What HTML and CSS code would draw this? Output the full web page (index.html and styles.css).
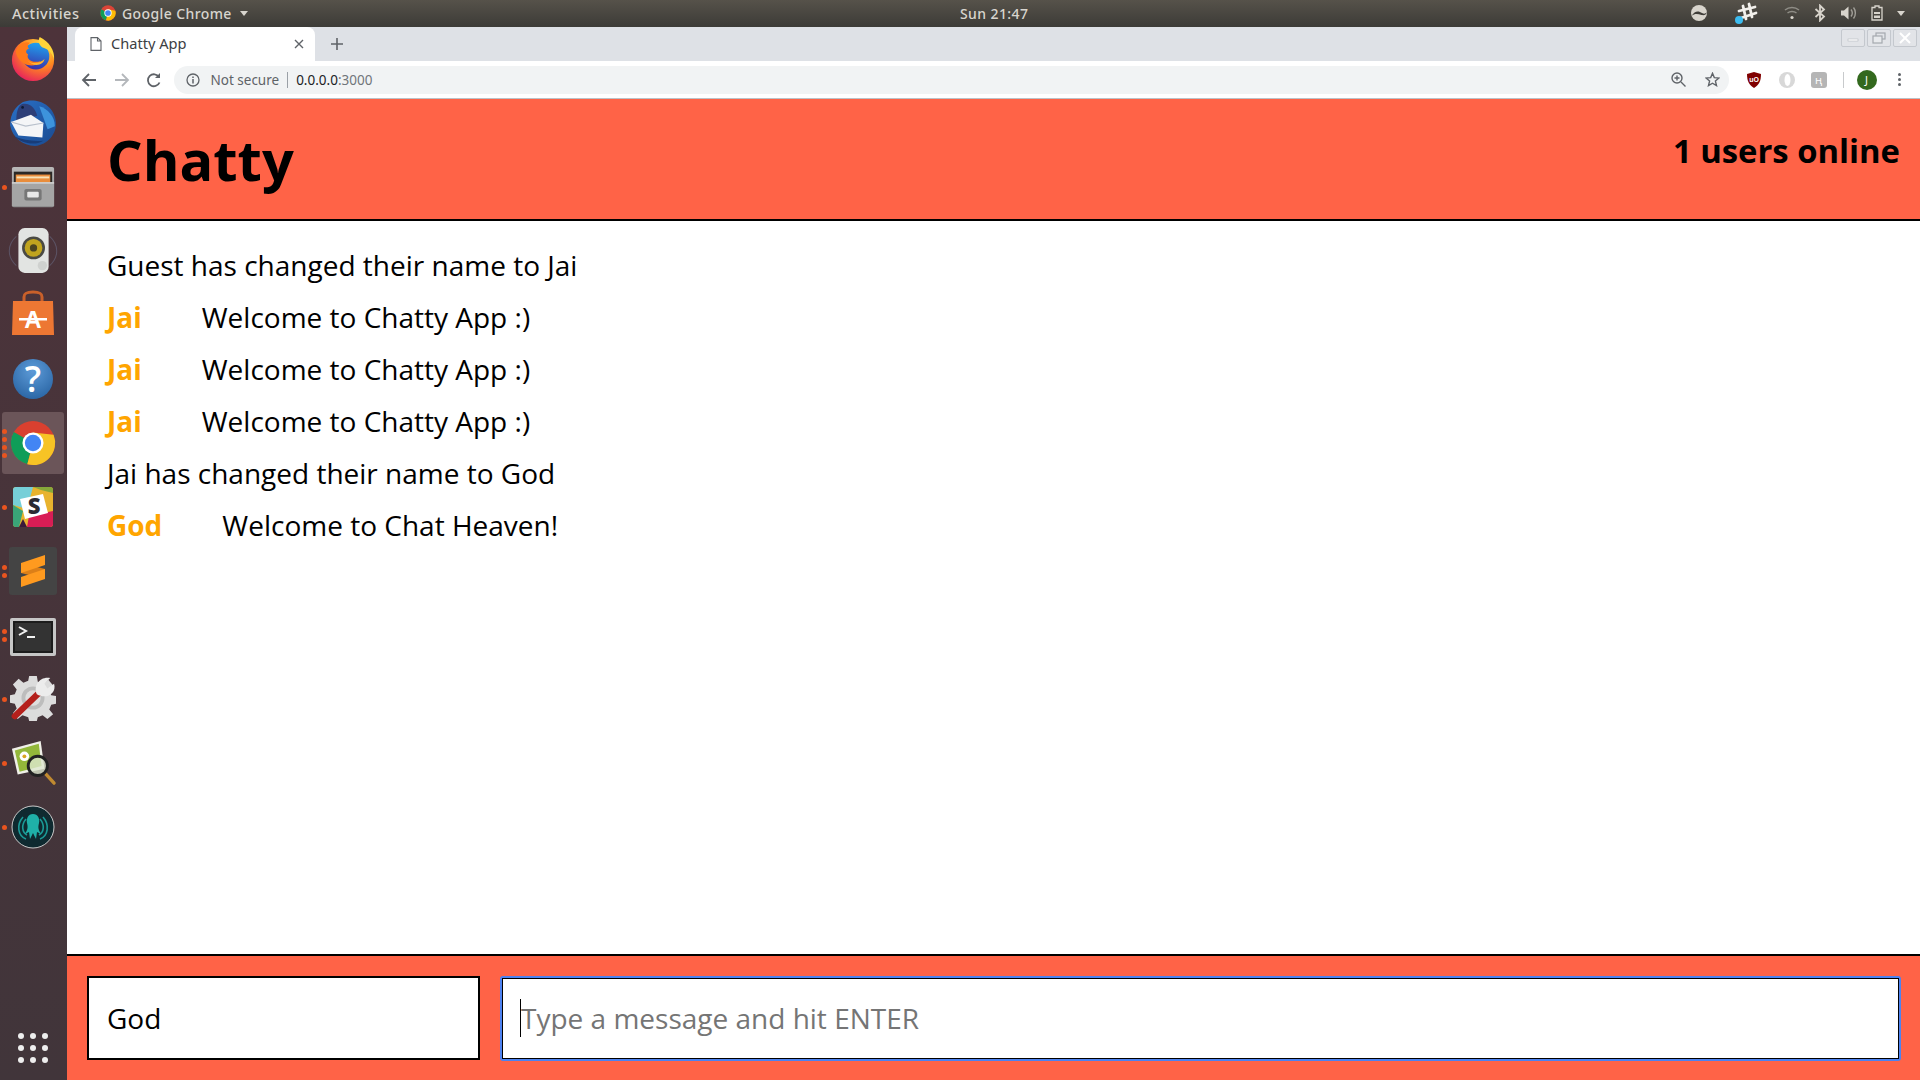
FILE: index.html
```html
<!DOCTYPE html>
<html lang="en">
<head>
    <meta charset="UTF-8">
    <title>Chatty App</title>
    <link rel="stylesheet" href="styles.css">
</head>
<body>

    <!-- Ubuntu top bar -->
    <div class="topbar">
        <div class="top-left">
            <span class="top-activities">Activities</span>
            <svg class="top-chrome" width="16" height="16" viewBox="0 0 48 48">
                <circle cx="24" cy="24" r="23" fill="#db4437"/>
                <path d="M24 24 L4 13 A23 23 0 0 0 18 46 Z" fill="#0f9d58"/>
                <path d="M24 24 L18 46 A23 23 0 0 0 46 17 L24 13 Z" fill="#fbbc05"/>
                <circle cx="24" cy="24" r="11" fill="#fff"/>
                <circle cx="24" cy="24" r="8.5" fill="#4285f4"/>
            </svg>
            <span class="top-app">Google Chrome</span>
            <span class="top-caret"></span>
        </div>
        <div class="top-clock">Sun 21:47</div>
        <div class="top-right">
            <svg class="tray-update" width="18" height="18" viewBox="0 0 18 18">
                <circle cx="9" cy="9" r="8" fill="#d8d4cc"/>
                <path d="M1.500 12 C5 6 9 7 12 9 C14 10 15.500 10 16.800 8 C16.500 11 14 11.500 11.500 11 C8 10 5 9 1.500 12 Z" fill="#3f3d38"/>
            </svg>
            <svg class="tray-slack" width="24" height="24" viewBox="0 0 24 24">
                <g stroke="#f2f0ec" stroke-width="2.8" stroke-linecap="round">
                    <path d="M9 5 L12 18"/>
                    <path d="M15 3 L18 16"/>
                    <path d="M5 10 L21 6"/>
                    <path d="M7 17 L22 12"/>
                </g>
                <circle cx="5" cy="19" r="4" fill="#3bbcf0"/>
            </svg>
            <svg class="tray-wifi" width="16" height="16" viewBox="0 0 16 16" fill="none" stroke="#8f8d86" stroke-width="1.5">
                <path d="M1 5 C5 1.500 11 1.500 15 5"/>
                <path d="M3.500 8 C6 6 10 6 12.500 8"/>
                <circle cx="8" cy="12.500" r="1.600" fill="#d8d4cc" stroke="none"/>
            </svg>
            <svg class="tray-bt" width="12" height="18" viewBox="0 0 12 18" fill="none" stroke="#d8d4cc" stroke-width="1.800">
                <path d="M1.500 5 L10 12.500 L6 16.500 V1.500 L10 5.500 L1.500 13"/>
            </svg>
            <svg class="tray-vol" width="18" height="16" viewBox="0 0 18 16">
                <path d="M1 5.500 H4 L8.500 1.500 V14.500 L4 10.500 H1 Z" fill="#d8d4cc"/>
                <path d="M11 4.500 C12.500 6.500 12.500 9.500 11 11.500 M13.500 2.500 C16 5.500 16 10.500 13.500 13.500" fill="none" stroke="#a09e97" stroke-width="1.400"/>
            </svg>
            <svg class="tray-batt" width="12" height="16" viewBox="0 0 12 16" fill="none">
                <path d="M4 1 H8 V2.500 H11 V15 H1 V2.500 H4 Z" stroke="#d8d4cc" stroke-width="1.300"/>
                <rect x="3" y="7" width="6" height="2" fill="#d8d4cc"/>
                <rect x="3" y="10.500" width="6" height="2.500" fill="#d8d4cc"/>
            </svg>
            <span class="top-caret tray-caret"></span>
        </div>
    </div>

    <div class="desktop">
        <!-- Launcher -->
        <div class="dock">
            <div class="dock-item">
                <svg width="46" height="46" viewBox="0 0 48 48">
                    <defs>
                        <radialGradient id="ffBody" cx="0.7" cy="0.2" r="1">
                            <stop offset="0" stop-color="#ffe14a"/>
                            <stop offset="0.45" stop-color="#ff8a1f"/>
                            <stop offset="0.85" stop-color="#e8275a"/>
                            <stop offset="1" stop-color="#c41f78"/>
                        </radialGradient>
                        <linearGradient id="ffBlue" x1="0.6" y1="0" x2="0.4" y2="1">
                            <stop offset="0" stop-color="#1fa3f0"/>
                            <stop offset="1" stop-color="#3a2fa8"/>
                        </linearGradient>
                    </defs>
                    <circle cx="24" cy="25" r="22" fill="url(#ffBody)"/>
                    <circle cx="27" cy="21" r="14" fill="url(#ffBlue)"/>
                    <path d="M31 1 C41 6 47 15 46 25 C44 16 38 13 34 12 C30 9 29 5 31 1 Z" fill="#ffd53a"/>
                    <path d="M6 16 C9 8 15 5 21 7 C18 9 18 12 20 13 C16 14 16 18 19 19 C16 24 24 29 32 26 C29 31 21 32 15 29 C10 26 7 22 6 16 Z" fill="#ff7a1a"/>
                    <path d="M18 25 C23 30 31 29 36 24 C35 31 24 33 18 25 Z" fill="#ffb52e"/>
                </svg>
            </div>
            <div class="dock-item">
                <svg width="50" height="50" viewBox="0 0 48 48">
                    <defs>
                        <linearGradient id="tbBlue" x1="0" y1="0" x2="1" y2="1">
                            <stop offset="0" stop-color="#2a71c8"/>
                            <stop offset="1" stop-color="#1a4a90"/>
                        </linearGradient>
                    </defs>
                    <path d="M14 4 C26 -1 44 5 46 23 C47 34 38 45 26 46 C14 46 4 38 2 26 C2 14 8 8 14 4 Z" fill="url(#tbBlue)"/>
                    <path d="M30 8 C38 10 45 18 45 27 L38 30 Z" fill="#3d93dc"/>
                    <path d="M13 6 C21 4 26 10 28 17 L8 22 C8 14 9 9 13 6 Z" fill="#2d3f78"/>
                    <path d="M3 23 L22 16 L34 24 L33 38 L10 36 Z" fill="#f4f5f7"/>
                    <path d="M3 23 L17 27 L34 24" fill="none" stroke="#b8c0cc" stroke-width="1"/>
                    <path d="M6 37 C14 44 26 46 34 41 C24 42 14 40 6 37 Z" fill="#183c78"/>
                    <circle cx="14" cy="9" r="1.300" fill="#0d1a33"/>
                </svg>
            </div>
            <div class="dock-item">
                <svg width="46" height="46" viewBox="0 0 48 48">
                    <defs>
                        <linearGradient id="cabinet" x1="0" y1="0" x2="0" y2="1">
                            <stop offset="0" stop-color="#b9b9b9"/>
                            <stop offset="1" stop-color="#8c8c8c"/>
                        </linearGradient>
                    </defs>
                    <rect x="2" y="3" width="44" height="42" rx="2" fill="url(#cabinet)"/>
                    <rect x="4" y="8" width="40" height="12" fill="#2b2826"/>
                    <rect x="6" y="11" width="36" height="9" fill="#e98d3c"/>
                    <rect x="7" y="13" width="34" height="2" fill="#f7e2b8"/>
                    <rect x="2" y="19" width="44" height="25" fill="#a5a5a5"/>
                    <rect x="2" y="19" width="44" height="1.500" fill="#d6d6d6"/>
                    <rect x="15" y="26" width="18" height="12" rx="2" fill="#777"/>
                    <rect x="18" y="29" width="12" height="6" rx="1" fill="#e8e8e8"/>
                </svg>
                <div class="dots"><i></i></div>
            </div>
            <div class="dock-item">
                <svg width="50" height="50" viewBox="0 0 48 48">
                    <g fill="none" stroke="#5c5364" stroke-width="1">
                        <path d="M8 10 C-1 18 -1 30 8 38"/>
                        <path d="M40 10 C49 18 49 30 40 38"/>
                    </g>
                    <rect x="10" y="2" width="29" height="43" rx="6" fill="#e2e4e2"/>
                    <circle cx="24.500" cy="21" r="11" fill="#4a4a44"/>
                    <circle cx="24.500" cy="21" r="8.500" fill="#c0a41e"/>
                    <circle cx="24.500" cy="21" r="3.500" fill="#4b4520"/>
                    <circle cx="33" cy="38" r="4.500" fill="#cfd1cf"/>
                </svg>
            </div>
            <div class="dock-item dock-up">
                <svg width="44" height="46" viewBox="0 0 44 46">
                    <path d="M13 12 V6 C13 2 16 1 22 1 C28 1 31 2 31 6 V12" fill="none" stroke="#c9602a" stroke-width="3"/>
                    <path d="M2 10 H42 L43 44 H1 Z" fill="#ed7733"/>
                    <rect x="8" y="27" width="28" height="2.500" fill="#fff"/>
                    <text class="store-letter" x="22" y="37" text-anchor="middle">A</text>
                </svg>
            </div>
            <div class="dock-item">
                <svg width="42" height="42" viewBox="0 0 42 42">
                    <defs>
                        <radialGradient id="helpBlue" cx="0.5" cy="0.3" r="0.8">
                            <stop offset="0" stop-color="#5d9bd8"/>
                            <stop offset="1" stop-color="#25609f"/>
                        </radialGradient>
                    </defs>
                    <circle cx="21" cy="21" r="20" fill="url(#helpBlue)"/>
                    <text class="help-mark" x="21" y="34" text-anchor="middle">?</text>
                </svg>
            </div>
            <div class="dock-item dock-active">
                <svg width="46" height="46" viewBox="0 0 48 48">
                    <circle cx="24" cy="24" r="23" fill="#d9402f"/>
                    <path d="M24 24 L4 12.500 A23 23 0 0 0 18 46.200 Z" fill="#0f9d58"/>
                    <path d="M24 24 L18 46.200 A23 23 0 0 0 45.500 15.500 L24 13 Z" fill="#f7c325"/>
                    <circle cx="24" cy="24" r="11" fill="#fff"/>
                    <circle cx="24" cy="24" r="8.500" fill="#4285f4"/>
                </svg>
                <div class="dots"><i></i><i></i><i></i><i></i></div>
            </div>
            <div class="dock-item">
                <svg width="40" height="40" viewBox="0 0 40 40">
                    <rect width="40" height="40" rx="3" fill="#e8b32e"/>
                    <path d="M0 3 C0 1 1 0 3 0 H20 L14 22 L0 18 Z" fill="#76cfd8"/>
                    <path d="M20 0 H37 C39 0 40 1 40 3 V6 L28 3 Z" fill="#86a83a"/>
                    <path d="M0 18 L10 24 L6 40 H3 C1 40 0 39 0 37 Z" fill="#3aa578"/>
                    <path d="M6 40 L10 32 L14 40 Z" fill="#3a1a3a"/>
                    <path d="M14 40 L16 29 L40 24 V37 C40 39 39 40 37 40 Z" fill="#d81d55"/>
                    <path d="M7 12 L30 7 L35 26 L12 32 Z" fill="#fff"/>
                    <text class="slack-letter" x="21" y="27" text-anchor="middle">S</text>
                </svg>
                <div class="dots"><i></i></div>
            </div>
            <div class="dock-item">
                <svg width="48" height="48" viewBox="0 0 48 48">
                    <rect width="48" height="48" rx="3" fill="#444444"/>
                    <path d="M12 16 L36 22 V32 L12 26 Z" fill="#dc7f18"/>
                    <path d="M12 16 L36 8 V18 L12 26 Z" fill="#ff9a1f"/>
                    <path d="M12 30 L36 22 V32 L12 40 Z" fill="#ff9a1f"/>
                </svg>
                <div class="dots"><i></i><i></i></div>
            </div>
            <div class="dock-item dock-down">
                <svg width="46" height="38" viewBox="0 0 46 38">
                    <rect width="46" height="38" rx="2" fill="#c6c6c6"/>
                    <rect x="3" y="3" width="40" height="32" fill="#1c1c1c"/>
                    <rect x="5" y="5" width="36" height="28" fill="#333333"/>
                    <path d="M9 9 L16 13 L9 17" fill="none" stroke="#f2f2f2" stroke-width="2"/>
                    <rect x="17" y="18" width="8" height="2" fill="#f2f2f2"/>
                </svg>
                <div class="dots"><i></i><i></i></div>
            </div>
            <div class="dock-item dock-up">
                <svg width="46" height="46" viewBox="0 0 48 48">
                    <path d="M20 1 H28 L29 7 L35 9 L40 5 L45 11 L41 16 L43 21 L48 22 V30 L43 31 L41 36 L45 41 L39 46 L34 42 L29 44 L28 48 H20 L19 44 L13 42 L8 46 L3 40 L7 35 L5 30 L0 29 V21 L5 20 L7 15 L3 10 L9 4 L14 8 L19 6 Z" fill="#dcdcdc"/>
                    <circle cx="24" cy="24" r="12" fill="#bdbdbd"/>
                    <circle cx="24" cy="24" r="8" fill="#dedede"/>
                    <path d="M5 43 L31 18" stroke="#b5201c" stroke-width="6.500" stroke-linecap="round"/>
                    <path d="M28 20 C24 11 31 1 42 3 L36 9 L39 14 L46 9 C49 19 38 26 28 20 Z" fill="#ececec"/>
                </svg>
                <div class="dots"><i></i></div>
            </div>
            <div class="dock-item">
                <svg width="46" height="46" viewBox="0 0 48 48">
                    <path d="M2 9 L32 1 L36 30 L8 36 Z" fill="#f0f0e8"/>
                    <path d="M5 11 L30 4 L33 27 L10 33 Z" fill="#93b83a"/>
                    <circle cx="15" cy="17" r="5" fill="#fff"/>
                    <circle cx="15" cy="17" r="2" fill="#d9a521"/>
                    <path d="M37 35 L46 45" stroke="#c08a30" stroke-width="3.500" stroke-linecap="round"/>
                    <circle cx="29" cy="27" r="10" fill="#dfe8d0" fill-opacity="0.8" stroke="#222" stroke-width="3"/>
                </svg>
                <div class="dots"><i></i></div>
            </div>
            <div class="dock-item">
                <svg width="44" height="44" viewBox="0 0 44 44">
                    <circle cx="22" cy="22" r="21" fill="#0f2a30" stroke="#c9c9c9" stroke-width="1"/>
                    <g fill="none" stroke="#1b9a96" stroke-width="1.600">
                        <path d="M12 12 C5 20 7 31 15 34"/>
                        <path d="M32 12 C39 20 37 31 29 34"/>
                        <path d="M15 14 C10 20 11 27 16 30"/>
                        <path d="M29 14 C34 20 33 27 28 30"/>
                    </g>
                    <path d="M22 9 C27 9 29 14 28 18 C27 22 27 24 30 29 L26 27 L25 34 L22 28 L19 34 L18 27 L14 29 C17 24 17 22 16 18 C15 14 17 9 22 9 Z" fill="#1fb0a8"/>
                </svg>
                <div class="dots"><i></i></div>
            </div>
            <div class="dock-grid">
                <i></i><i></i><i></i><i></i><i></i><i></i><i></i><i></i><i></i>
            </div>
        </div>

        <div class="window">
            <!-- Tab strip -->
            <div class="tabstrip">
                <div class="tab">
                    <svg width="12" height="14" viewBox="0 0 12 14" fill="none" stroke="#5f6368" stroke-width="1.100">
                        <path d="M1 .6 H7.500 L11 4 V13.400 H1 Z M7.500 .6 V4 H11"/>
                    </svg>
                    <span class="tab-title">Chatty App</span>
                    <svg class="tab-close" width="10" height="10" viewBox="0 0 10 10" stroke="#5f6368" stroke-width="1.400">
                        <path d="M1 1 L9 9 M9 1 L1 9"/>
                    </svg>
                </div>
                <svg class="tab-new" width="12" height="12" viewBox="0 0 12 12" stroke="#5f6368" stroke-width="1.600">
                    <path d="M6 0 V12 M0 6 H12"/>
                </svg>
                <div class="win-buttons">
                    <div class="win-btn">
                        <svg width="12" height="12" viewBox="0 0 12 12"><rect x="1" y="7" width="10" height="2" fill="#fff" stroke="#b4b8be" stroke-width=".6"/></svg>
                    </div>
                    <div class="win-btn">
                        <svg width="14" height="12" viewBox="0 0 14 12" fill="none" stroke="#a4a8ae" stroke-width="1.200"><rect x="4" y="1" width="9" height="6"/><rect x="1" y="4" width="9" height="7" fill="#e8eaed"/></svg>
                    </div>
                    <div class="win-btn">
                        <svg width="12" height="12" viewBox="0 0 12 12" stroke="#fff" stroke-width="2"><path d="M1 1 L11 11 M11 1 L1 11"/></svg>
                    </div>
                </div>
            </div>

            <!-- Address bar -->
            <div class="toolbar">
                <svg class="nav-icon" width="16" height="16" viewBox="0 0 16 16" fill="none" stroke="#5f6368" stroke-width="1.800">
                    <path d="M15 8 H2 M8 2 L2 8 L8 14"/>
                </svg>
                <svg class="nav-icon" width="16" height="16" viewBox="0 0 16 16" fill="none" stroke="#b4b7bb" stroke-width="1.800">
                    <path d="M1 8 H14 M8 2 L14 8 L8 14"/>
                </svg>
                <svg class="nav-icon" width="16" height="16" viewBox="0 0 16 16" fill="none" stroke="#5f6368" stroke-width="1.800">
                    <path d="M13.500 10.500 A6 6 0 1 1 13 5"/>
                    <path d="M14 1 V6 H9" fill="#5f6368" stroke="none"/>
                </svg>
                <div class="omnibox">
                    <svg width="14" height="14" viewBox="0 0 14 14" fill="none" stroke="#5f6368" stroke-width="1.300">
                        <circle cx="7" cy="7" r="6"/>
                        <path d="M7 6 V10.500 M7 3.500 V5" stroke-width="1.500"/>
                    </svg>
                    <span class="omni-secure">Not secure</span>
                    <span class="omni-divider"></span>
                    <span class="omni-url">0.0.0.0<span class="omni-port">:3000</span></span>
                    <svg class="omni-zoom" width="15" height="15" viewBox="0 0 15 15" fill="none" stroke="#5f6368" stroke-width="1.400">
                        <circle cx="6" cy="6" r="5"/>
                        <path d="M10 10 L14.500 14.500 M3.500 6 H8.500 M6 3.500 V8.500"/>
                    </svg>
                    <svg class="omni-star" width="15" height="15" viewBox="0 0 15 15" fill="none" stroke="#5f6368" stroke-width="1.400">
                        <path d="M7.500 1.300 L9.300 5.600 L14 6 L10.400 9 L11.500 13.600 L7.500 11.200 L3.500 13.600 L4.600 9 L1 6 L5.700 5.600 Z"/>
                    </svg>
                </div>
                <svg class="ext-icon" width="14" height="16" viewBox="0 0 14 16">
                    <path d="M7 0 L14 2 C14 9 12 13 7 16 C2 13 0 9 0 2 Z" fill="#800000"/>
                    <text class="ublock-letters" x="7" y="10" text-anchor="middle">uO</text>
                </svg>
                <svg class="ext-icon" width="16" height="16" viewBox="0 0 16 16">
                    <circle cx="8" cy="8" r="8" fill="#d8d8d8"/>
                    <ellipse cx="8.500" cy="8" rx="3" ry="6" fill="#fff"/>
                </svg>
                <div class="ext-k">ң</div>
                <span class="toolbar-divider"></span>
                <div class="avatar">J</div>
                <div class="kebab"><i></i><i></i><i></i></div>
            </div>

            <!-- Chatty app -->
            <div class="app">
                <nav class="navbar">
                    <h1 class="navbar-brand">Chatty</h1>
                    <span class="navbar-users">1 users online</span>
                </nav>
                <main class="messages">
                    <div class="message">Guest has changed their name to Jai</div>
                    <div class="message"><span class="message-user">Jai</span>Welcome to Chatty App :)</div>
                    <div class="message"><span class="message-user">Jai</span>Welcome to Chatty App :)</div>
                    <div class="message"><span class="message-user">Jai</span>Welcome to Chatty App :)</div>
                    <div class="message">Jai has changed their name to God</div>
                    <div class="message"><span class="message-user">God</span>Welcome to Chat Heaven!</div>
                </main>
                <footer class="chatbar">
                    <input class="chatbar-name" type="text" value="God">
                    <div class="chatbar-wrap">
                        <input class="chatbar-message" type="text" placeholder="Type a message and hit ENTER">
                        <span class="chatbar-caret"></span>
                    </div>
                </footer>
            </div>
        </div>
    </div>

</body>
</html>
```

FILE: styles.css
```css
* {
    box-sizing: border-box;
}

body {
    margin: 0;
    width: 1920px;
    height: 1080px;
    overflow: hidden;
    display: flex;
    flex-direction: column;
    font-family: "Open Sans", sans-serif;
    background-color: #fff;
}

/* top bar */
.topbar {
    height: 27px;
    flex: none;
    display: grid;
    grid-template-columns: 960px auto 1fr;
    align-items: center;
    padding-bottom: 1px;
    background: linear-gradient(#56524a, #3c3b37);
    color: #d8d5ce;
    font-family: "Noto Sans", sans-serif;
    font-size: 14px;
    font-weight: 500;
}

.top-left {
    display: flex;
    align-items: center;
    padding-left: 12px;
}

.top-activities {
    width: 88px;
    font-size: 14.500px;
    letter-spacing: .5px;
}

.top-app {
    margin-left: 6px;
    letter-spacing: .4px;
}

.top-caret {
    width: 0;
    height: 0;
    margin-left: 8px;
    border-left: 4.500px solid transparent;
    border-right: 4.500px solid transparent;
    border-top: 5px solid #d8d5ce;
}

.top-clock {
    letter-spacing: .4px;
}

.top-right {
    display: flex;
    align-items: center;
    justify-content: flex-end;
    padding-right: 15px;
}

.tray-slack {
    margin-left: 26px;
}

.tray-wifi {
    margin-left: 26px;
}

.tray-bt {
    margin-left: 14px;
}

.tray-vol {
    margin-left: 14px;
}

.tray-batt {
    margin-left: 13px;
}

.tray-caret {
    margin-left: 14px;
}

.desktop {
    flex: 1;
    display: flex;
    min-height: 0;
}

/* launcher */
.dock {
    width: 67px;
    flex: none;
    display: flex;
    flex-direction: column;
    background: linear-gradient(#4d333a, #41353a);
}

.dock-item {
    position: relative;
    height: 64px;
    flex: none;
    display: flex;
    align-items: center;
    justify-content: center;
    padding-right: 1px;
}

.dock svg {
    overflow: visible;
}

.dock-up svg {
    margin-bottom: 3px;
}

.dock-down svg {
    margin-top: 4px;
}

.dock-active::before {
    content: "";
    position: absolute;
    left: 2px;
    right: 3px;
    top: 1px;
    bottom: 1px;
    border-radius: 3px;
    background-color: #6b5559;
}

.dock-active svg {
    position: relative;
}

.dots {
    position: absolute;
    left: 2px;
    top: 0;
    bottom: 0;
    display: flex;
    flex-direction: column;
    justify-content: center;
    gap: 3px;
}

.dots i {
    width: 5px;
    height: 5px;
    border-radius: 50%;
    background-color: #e9541f;
}

.dock-grid {
    margin: auto 0 17px 18px;
    display: grid;
    grid-template-columns: repeat(3, 6px);
    grid-auto-rows: 6px;
    gap: 6px;
}

.dock-grid i {
    border-radius: 50%;
    background-color: #eeeeee;
}

.store-letter {
    font-family: "Liberation Sans", sans-serif;
    font-size: 24px;
    font-weight: bold;
    fill: #fff;
}

.help-mark {
    font-family: "Open Sans", sans-serif;
    font-size: 36px;
    font-weight: 600;
    fill: #fff;
}

.slack-letter {
    font-family: "Open Sans", sans-serif;
    font-size: 22px;
    font-weight: 800;
    fill: #2b2b33;
}

.ublock-letters {
    font-family: "Liberation Sans", sans-serif;
    font-size: 7px;
    font-weight: bold;
    fill: #fff;
}

/* browser */
.window {
    flex: 1;
    min-width: 0;
    display: flex;
    flex-direction: column;
}

.tabstrip {
    height: 34px;
    flex: none;
    display: flex;
    align-items: center;
    padding-left: 8px;
    background-color: #dee1e6;
}

.tab {
    width: 240px;
    height: 34px;
    display: flex;
    align-items: center;
    padding: 0 11px 0 15px;
    border-radius: 8px 8px 0 0;
    background-color: #fff;
}

.tab-title {
    margin: 0 0 2px 9px;
    font-family: "Noto Sans", sans-serif;
    font-size: 14.600px;
    color: #3c4043;
}

.tab-close {
    margin-left: auto;
}

.tab-new {
    margin-left: 16px;
}

.win-buttons {
    margin-left: auto;
    align-self: flex-start;
    display: flex;
    gap: 2px;
    padding: 2px 3px 0 0;
}

.win-btn {
    width: 24px;
    height: 18px;
    display: flex;
    align-items: center;
    justify-content: center;
    border: 1px solid #c4c8ce;
    border-radius: 2px;
    background-color: #e2e4e8;
}

.toolbar {
    height: 38px;
    flex: none;
    display: flex;
    align-items: center;
    padding: 0 13px 0 14px;
    border-bottom: 1px solid #bcc0c6;
    background-color: #fff;
}

.nav-icon {
    margin-right: 16.500px;
}

.omnibox {
    width: 1555px;
    height: 28px;
    margin-left: -5px;
    display: flex;
    align-items: center;
    padding: 0 9px 0 12px;
    border-radius: 14px;
    background-color: #f1f3f4;
    font-family: "Noto Sans", sans-serif;
    font-size: 13.500px;
}

.omni-secure {
    margin-left: 11px;
    color: #5f6368;
}

.omni-divider {
    width: 1px;
    height: 16px;
    margin: 0 8px;
    background-color: #9aa0a6;
}

.omni-url {
    color: #202124;
}

.omni-port {
    color: #70757a;
}

.omni-zoom {
    margin-left: auto;
    margin-right: 19px;
}

.ext-icon {
    margin-left: 18px;
}

.ext-k {
    width: 16px;
    height: 16px;
    margin-left: 16px;
    border-radius: 3px;
    background-color: #b5b5b5;
    color: #fff;
    font-size: 11px;
    line-height: 16px;
    text-align: center;
}

.toolbar-divider {
    width: 1px;
    height: 16px;
    margin: 0 13px 0 16px;
    background-color: #c8cacc;
}

.avatar {
    width: 20px;
    height: 20px;
    border-radius: 50%;
    background-color: #33691e;
    color: #fff;
    font-family: "Noto Sans", sans-serif;
    font-size: 11px;
    line-height: 20px;
    text-align: center;
}

.kebab {
    display: flex;
    flex-direction: column;
    gap: 2px;
    margin-left: 21px;
}

.kebab i {
    width: 3px;
    height: 3px;
    border-radius: 50%;
    background-color: #5f6368;
}

/* chatty */
.app {
    flex: 1;
    min-height: 0;
    display: flex;
    flex-direction: column;
}

.navbar {
    height: 122px;
    flex: none;
    display: flex;
    justify-content: space-between;
    padding: 0 20px 0 40px;
    border-bottom: 2px solid #000;
    background-color: tomato;
    color: #000;
}

.navbar-brand {
    margin: 0;
    font-size: 56px;
    font-weight: 700;
    line-height: 120px;
}

.navbar-users {
    font-size: 32.800px;
    font-weight: 700;
    line-height: 104px;
}

.messages {
    flex: 1;
    min-height: 0;
    padding: 18px 0 0 40px;
    background-color: #fff;
}

.message {
    height: 52px;
    font-size: 28px;
    line-height: 52px;
    color: #000;
}

.message-user {
    margin-right: 60px;
    font-weight: 700;
    color: orange;
}

.chatbar {
    height: 126px;
    flex: none;
    display: flex;
    gap: 20px;
    padding: 20px 19px 20px 20px;
    border-top: 2px solid #000;
    background-color: tomato;
}

.chatbar-name {
    width: 393px;
    height: 84px;
    padding: 0 18px;
    border: 2px solid #000;
    outline: none;
    background-color: #fff;
    color: #000;
    font-family: "Open Sans", sans-serif;
    font-size: 28px;
}

.chatbar-wrap {
    position: relative;
    flex: 1;
    height: 85px;
    border: 2px solid #4d82f0;
    border-radius: 3px;
}

.chatbar-message {
    display: block;
    width: 100%;
    height: 100%;
    padding: 0 18px 1px;
    border: 1px solid #000;
    outline: none;
    background-color: #fff;
    font-family: "Open Sans", sans-serif;
    font-size: 28px;
}

.chatbar-message::placeholder {
    color: #757575;
}

.chatbar-caret {
    position: absolute;
    left: 18px;
    top: 21px;
    width: 1px;
    height: 38px;
    background-color: #000;
}
```
